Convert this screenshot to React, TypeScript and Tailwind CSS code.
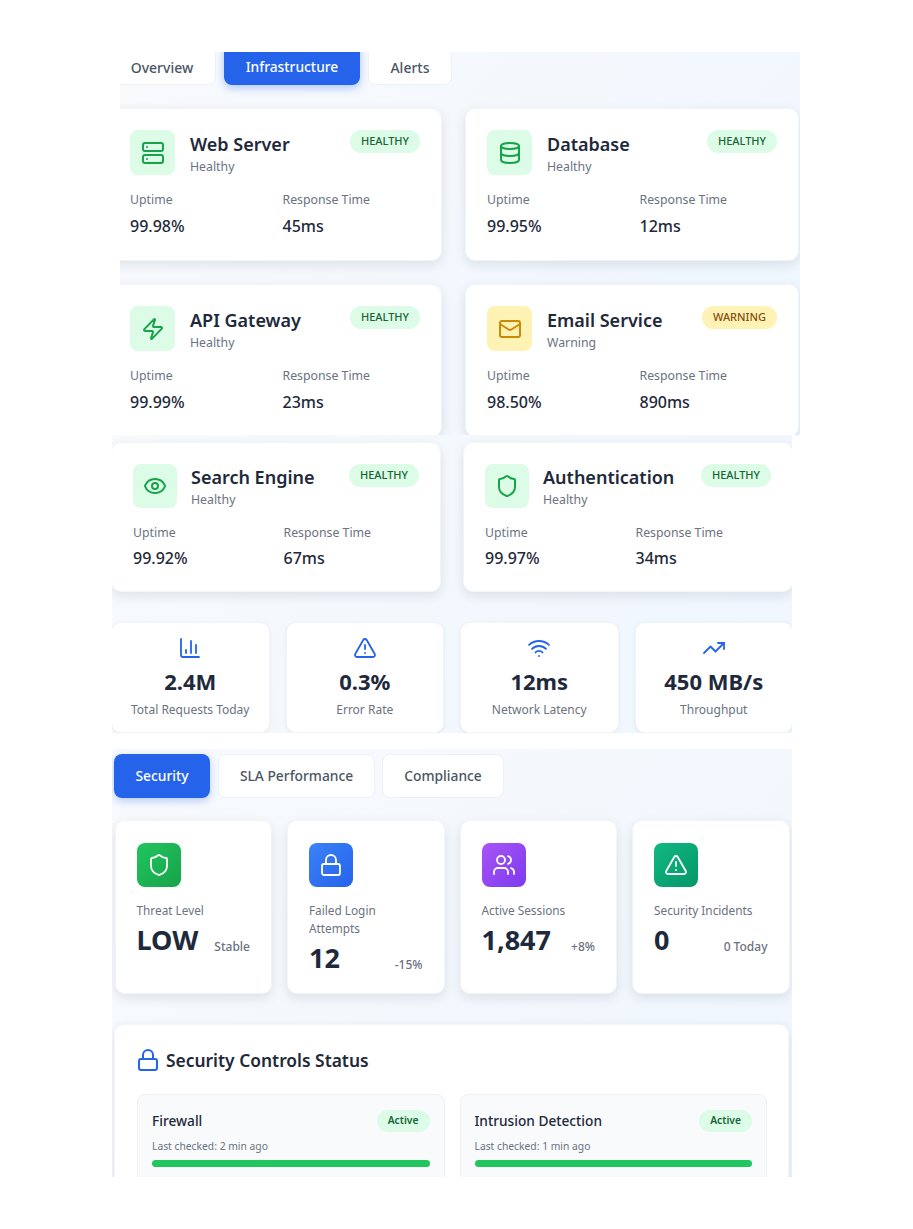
import React from "react";
import { Server, Database, Zap, Mail, Eye, Shield, ChartColumn, TriangleAlert, Wifi, TrendingUp, Lock, Users } from "lucide-react";

const panelBg = "bg-[linear-gradient(135deg,#f8fafc_0%,#eff6ff_100%)]";
const cardShadow = "shadow-[0_4px_12px_rgba(15,23,42,0.1)]";
const font = { fontFamily: '"Noto Sans", "Open Sans", sans-serif' };

type Svc = { icon: React.ElementType; name: string; status: string; up: string; rt: string; warn?: boolean };

function ServiceCard({ s, tall, compact }: { s: Svc; tall: string; compact?: boolean }) {
  const I = s.icon;
  return (
    <div className={`bg-white rounded-[10px] border border-[#f1f5f9] ${cardShadow} ${tall} p-[21px]`}>
      <div className="flex items-start">
        <div className={`${compact ? "w-[44px] h-[44px]" : "w-[45px] h-[45px]"} shrink-0 rounded-lg flex items-center justify-center ${s.warn ? "bg-[#fef3b4] text-[#ca8a04]" : "bg-[#dcfce7] text-[#16a34a]"}`}>
          <I size={24} strokeWidth={2} />
        </div>
        <div className={`${compact ? "ml-[14px] mt-0" : "ml-[15px] mt-[1px]"} flex-1 min-w-0`}>
          <div className="text-[18px] leading-[26px] font-semibold text-[#1e293b] whitespace-nowrap">{s.name}</div>
          <div className="text-[12.3px] leading-[18px] mt-[1px] text-[#6b7280]">{s.status}</div>
        </div>
        <div className={`shrink-0 h-[23px] px-[11px] rounded-full text-[11px] leading-[22px] font-medium ${s.warn ? "bg-[#fef3b4] text-[#854d0e]" : "bg-[#dcfce7] text-[#166534]"}`}>
          {s.warn ? "WARNING" : "HEALTHY"}
        </div>
      </div>
      <div className="grid grid-cols-2 gap-x-[15px] mt-[15px]">
        <div>
          <div className="text-[12.3px] leading-[18px] text-[#6b7280]">Uptime</div>
          <div className={`text-[16px] leading-[22px] font-medium text-[#1e293b] ${compact ? "mt-[5px]" : "mt-[6px]"}`}>{s.up}</div>
        </div>
        <div>
          <div className="text-[12.3px] leading-[18px] text-[#6b7280]">Response Time</div>
          <div className={`text-[16px] leading-[22px] font-medium text-[#1e293b] ${compact ? "mt-[5px]" : "mt-[6px]"}`}>{s.rt}</div>
        </div>
      </div>
    </div>
  );
}

function StatCard({ icon: I, value, label }: { icon: React.ElementType; value: string; label: string }) {
  return (
    <div className="bg-white rounded-[10px] border border-[#f1f5f9] shadow-[0_1px_4px_rgba(15,23,42,0.06)] h-[111px] flex flex-col items-center pt-[13px]">
      <I size={24} strokeWidth={1.8} className="text-[#2563eb]" />
      <div className="text-[22px] leading-[30px] font-bold text-[#1e293b] mt-[6px]">{value}</div>
      <div className="text-[12px] leading-[18px] text-[#6b7280] mt-[5px]">{label}</div>
    </div>
  );
}

function SecCard({ icon: I, grad, label, value, change }: { icon: React.ElementType; grad: string; label: string; value: string; change: string }) {
  return (
    <div className={`bg-white rounded-[10px] border border-[#f1f5f9] ${cardShadow} pl-[21px] pr-[21px] pt-[22px] h-[174px]`}>
      <div className={`w-[44px] h-[44px] rounded-lg flex items-center justify-center text-white ${grad}`}>
        <I size={24} strokeWidth={1.8} />
      </div>
      <div className="text-[11.8px] leading-[18px] text-[#6b7280] mt-[14px]">{label}</div>
      <div className="flex items-end justify-between mt-[3px]">
        <div className="text-[27px] leading-[36px] font-bold text-[#1e293b]">{value}</div>
        <div className="text-[12px] leading-[18px] font-medium text-[#6b7280] mb-[2px]">{change}</div>
      </div>
    </div>
  );
}

function Control({ name, time }: { name: string; time: string }) {
  return (
    <div className="bg-[#f8fafc] border border-[#edf1f6] rounded-lg px-[14px] pt-[15px] pb-[14px] h-[100px]">
      <div className="flex items-center justify-between">
        <div className="text-[13.7px] leading-[22px] font-medium text-[#1e293b]">{name}</div>
        <div className="h-[22px] px-[11px] rounded-full bg-[#dcfce7] text-[#166534] text-[10.3px] leading-[21px] font-semibold">Active</div>
      </div>
      <div className="text-[10.3px] leading-[16px] text-[#6b7280] mt-[6px]">{time}</div>
      <div className="h-[7px] rounded-full bg-[#22c55e] mt-[6px]" />
    </div>
  );
}

export default function App() {
  return (
    <div className="bg-white min-h-[1229px] pt-[52px]" style={font}>
      {/* first slice */}
      <div className={`ml-[120px] w-[680px] h-[383px] overflow-hidden ${panelBg}`}>
        <div className="flex gap-2 ml-[-12px] mt-[-11px]">
          <div className="w-[108px] h-[44px] pt-[8px] bg-white rounded-lg border border-[#edf1f6] text-[14px] font-medium text-[#4b5563] flex items-center justify-center">Overview</div>
          <div className="w-[136px] h-[44px] pt-[8px] bg-[#2563eb] rounded-lg text-[13.8px] font-medium text-white flex items-center justify-center shadow-[0_3px_8px_rgba(37,99,235,0.35)]">Infrastructure</div>
          <div className="w-[84px] h-[44px] pt-[8px] bg-white rounded-lg border border-[#edf1f6] text-[14px] font-medium text-[#4b5563] flex items-center justify-center">Alerts</div>
        </div>
        <div className="grid grid-cols-[334px_334px] gap-x-[23px] gap-y-[23px] ml-[-12px] mt-[23px]">
          <ServiceCard tall="h-[153px]" s={{ icon: Server, name: "Web Server", status: "Healthy", up: "99.98%", rt: "45ms" }} />
          <ServiceCard tall="h-[153px]" s={{ icon: Database, name: "Database", status: "Healthy", up: "99.95%", rt: "12ms" }} />
          <ServiceCard tall="h-[153px]" s={{ icon: Zap, name: "API Gateway", status: "Healthy", up: "99.99%", rt: "23ms" }} />
          <ServiceCard tall="h-[153px]" s={{ icon: Mail, name: "Email Service", status: "Warning", up: "98.50%", rt: "890ms", warn: true }} />
        </div>
      </div>
      {/* second slice */}
      <div className={`ml-[112px] w-[680px] h-[298px] overflow-hidden ${panelBg}`}>
        <div className="grid grid-cols-[330px_330px] gap-x-[22px] ml-[-1px] mt-[7px]">
          <ServiceCard compact tall="h-[150px]" s={{ icon: Eye, name: "Search Engine", status: "Healthy", up: "99.92%", rt: "67ms" }} />
          <ServiceCard compact tall="h-[150px]" s={{ icon: Shield, name: "Authentication", status: "Healthy", up: "99.97%", rt: "34ms" }} />
        </div>
        <div className="grid grid-cols-4 gap-x-[16px] ml-[-1px] w-[682px] mt-[30px]">
          <StatCard icon={ChartColumn} value="2.4M" label="Total Requests Today" />
          <StatCard icon={TriangleAlert} value="0.3%" label="Error Rate" />
          <StatCard icon={Wifi} value="12ms" label="Network Latency" />
          <StatCard icon={TrendingUp} value="450 MB/s" label="Throughput" />
        </div>
      </div>
      {/* third slice */}
      <div className={`ml-[112px] mt-[16px] w-[680px] h-[428px] overflow-hidden ${panelBg}`}>
        <div className="flex gap-2 ml-[2px] mt-[5px]">
          <div className="w-[96px] h-[44px] pt-[1px] bg-[#2563eb] rounded-lg text-[13.8px] font-medium text-white flex items-center justify-center shadow-[0_3px_8px_rgba(37,99,235,0.3)]">Security</div>
          <div className="w-[157px] h-[44px] pt-[1px] bg-white rounded-lg border border-[#edf1f6] text-[13.8px] font-medium text-[#4b5563] flex items-center justify-center">SLA Performance</div>
          <div className="w-[122px] h-[44px] pt-[1px] ml-[-1px] bg-white rounded-lg border border-[#edf1f6] text-[13.8px] font-medium text-[#4b5563] flex items-center justify-center">Compliance</div>
        </div>
        <div className="grid grid-cols-4 gap-x-[15px] ml-[2.5px] w-[675px] mt-[22px]">
          <SecCard icon={Shield} grad="bg-[linear-gradient(135deg,#22c55e,#16a34a)]" label="Threat Level" value="LOW" change="Stable" />
          <SecCard icon={Lock} grad="bg-[linear-gradient(135deg,#3b82f6,#2563eb)]" label="Failed Login Attempts" value="12" change="-15%" />
          <SecCard icon={Users} grad="bg-[linear-gradient(135deg,#a855f7,#7c3aed)]" label="Active Sessions" value="1,847" change="+8%" />
          <SecCard icon={TriangleAlert} grad="bg-[linear-gradient(135deg,#10b981,#059669)]" label="Security Incidents" value="0" change="0 Today" />
        </div>
        <div className={`bg-white rounded-[10px] border border-[#f1f5f9] ${cardShadow} ml-[2px] w-[675px] mt-[30px] px-[22px] pt-[21px] pb-[22px]`}>
          <div className="flex items-center gap-[6px]">
            <Lock size={24} strokeWidth={2} className="text-[#2563eb] ml-[-1px]" />
            <div className="text-[17.4px] leading-[28px] font-semibold text-[#1e293b]">Security Controls Status</div>
          </div>
          <div className="grid grid-cols-2 gap-x-[15px] mt-[20px] mr-[-1px]">
            <Control name="Firewall" time="Last checked: 2 min ago" />
            <Control name="Intrusion Detection" time="Last checked: 1 min ago" />
          </div>
        </div>
      </div>
    </div>
  );
}
